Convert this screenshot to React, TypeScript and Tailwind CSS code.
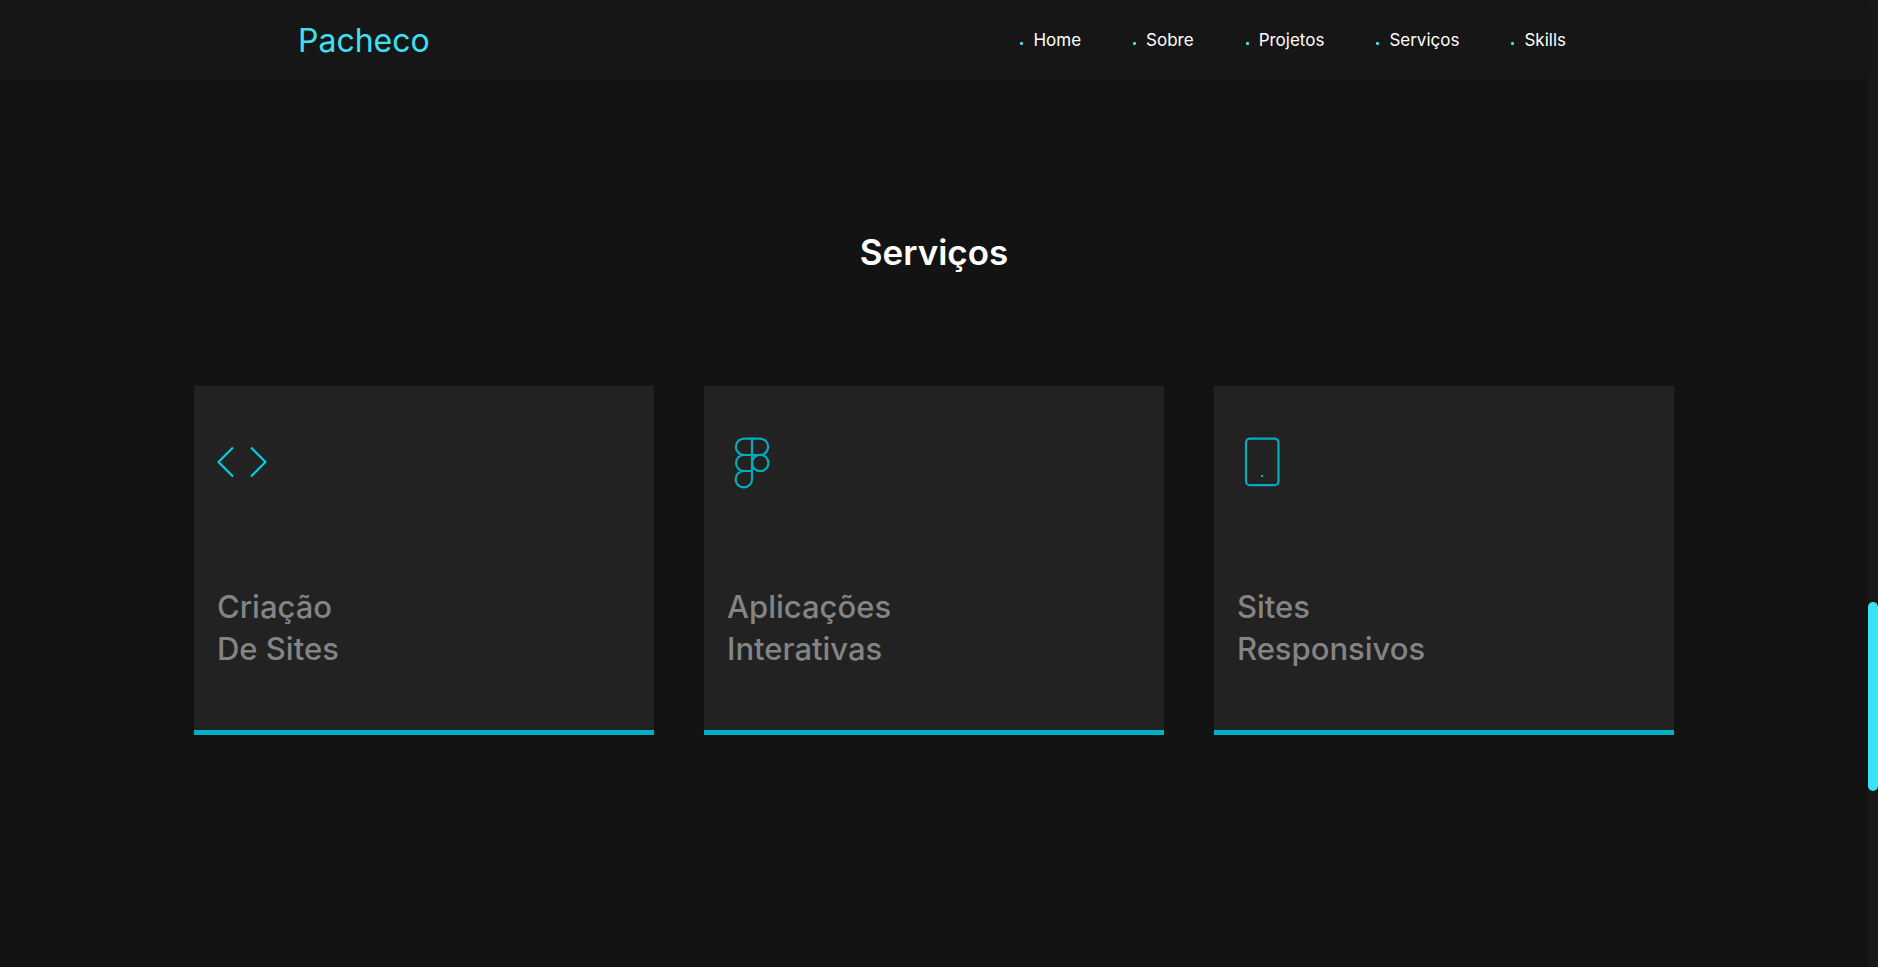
import type { ReactNode } from "react";

const links = ["Home", "Sobre", "Projetos", "Serviços", "Skills"];

function Icon({ children, className }: { children: ReactNode; className: string }) {
  return (
    <svg
      viewBox="0 0 50 50"
      fill="none"
      stroke="currentColor"
      strokeWidth="2.2"
      strokeLinecap="round"
      strokeLinejoin="round"
      aria-hidden="true"
      className={`size-[50px] overflow-visible ${className}`}
    >
      {children}
    </svg>
  );
}

const services = [
  {
    id: "sites",
    lines: ["Criação", "De Sites"],
    icon: (
      <Icon className="text-[#00cfdf]">
        <path d="M16 10.5 1.5 25 16 39.5M34 10.5 48.5 25 34 39.5" strokeLinecap="butt" />
      </Icon>
    ),
  },
  {
    id: "apps",
    lines: ["Aplicações", "Interativas"],
    icon: (
      <Icon className="text-[#00aebd]">
        <path d="M25 1.7h-8a8.15 8.15 0 0 0 0 16.3h8zM25 1.7h8a8.15 8.15 0 0 1 0 16.3h-8zM25 18h-8a8 8 0 0 0 0 16h8zM25 34h-8a8.2 8.2 0 1 0 8 8.2z" />
        <circle cx="33.2" cy="26" r="8.2" />
      </Icon>
    ),
  },
  {
    id: "responsive",
    lines: ["Sites", "Responsivos"],
    icon: (
      <Icon className="text-[#00aebd]">
        <rect x="9" y="1.7" width="32.5" height="46.5" rx="4" />
        <rect x="24" y="38" width="2" height="2" fill="currentColor" stroke="none" />
      </Icon>
    ),
  },
];

function Header() {
  return (
    <header className="border-t border-[#14141f] bg-[#161616]">
      <div className="mx-auto flex h-[78px] max-w-[1272px] items-center justify-between pr-1">
        <a href="#home" className="pt-0.5 text-[32px] leading-10 text-[#3de1f4]">
          Pacheco
        </a>
        <nav>
          <ul className="flex gap-[52px]">
            {links.map((link) => (
              <li key={link} className="flex items-center gap-2.5">
                <span className="mt-1.5 size-[3px] rounded-[1px] bg-[#3de1f4]" />
                <a href={`#${link.toLowerCase()}`} className="text-[17px] leading-6 text-white">
                  {link}
                </a>
              </li>
            ))}
          </ul>
        </nav>
      </div>
    </header>
  );
}

export default function App() {
  return (
    <div className="flex min-h-screen bg-[#131313] font-[Inter,sans-serif]">
      <div className="min-w-0 flex-1">
        <Header />
        <main className="mx-auto max-w-[1480px] pt-[149px]">
          <h2 className="text-center text-[35px] leading-[48px] font-semibold text-white">
            Serviços
          </h2>
          <div className="mt-[110px] grid grid-cols-3 gap-[50px]">
            {services.map((service) => (
              <article
                key={service.id}
                className="border-b-[5px] border-[#00b1c4] bg-[#222222] px-[23px] pt-[51px] pb-[60px]"
              >
                {service.icon}
                <h3 className="mt-[99px] text-[31px] leading-[42px] font-medium text-[#848484]">
                  {service.lines[0]}
                  <br />
                  {service.lines[1]}
                </h3>
              </article>
            ))}
          </div>
        </main>
      </div>
      <div className="flex w-2.5 flex-col bg-[#181818]" aria-hidden="true">
        <div className="grow-[602]" />
        <div className="grow-[189] rounded-full bg-[#3de1f4]" />
        <div className="grow-[176]" />
      </div>
    </div>
  );
}
